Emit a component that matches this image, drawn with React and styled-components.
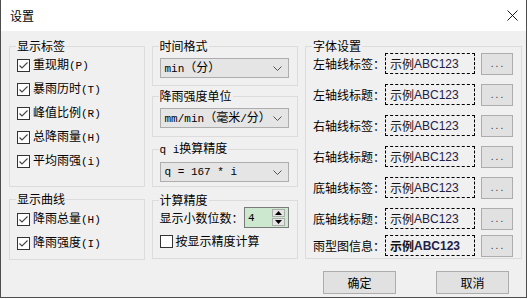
import styled, { createGlobalStyle } from 'styled-components';

const GlobalStyle = createGlobalStyle`
  html, body {
    margin: 0;
    background: #ffffff;
    font-family: "Noto Sans CJK SC", "Liberation Sans", sans-serif;
    font-size: 12px;
    color: #000;
  }
  * { box-sizing: border-box; }
`;

const Window = styled.div`
  width: 527px;
  height: 298px;
  border: 1px solid #4d4d4d;
  border-top: none;
  background: #f0f0f0;
  display: flex;
  flex-direction: column;
`;

const TitleBar = styled.div`
  height: 31px;
  background: #ffffff;
  display: flex;
  align-items: center;
  justify-content: space-between;
  padding: 0 8px 0 9px;
`;

const Title = styled.div`
  font-size: 12px;
  line-height: 14px;
`;

const Body = styled.div`
  flex: 1;
  display: flex;
  flex-direction: column;
  padding: 8px 4px 0 8px;
`;

const Columns = styled.div`
  display: flex;
  gap: 7px;
  align-items: flex-start;
`;

const Column = styled.div`
  width: ${(p) => p.$w}px;
  display: flex;
  flex-direction: column;
  gap: ${(p) => p.$gap || 0}px;
`;

const Group = styled.fieldset`
  margin: ${(p) => p.$mt || 0}px 0 0 0;
  padding: ${(p) => p.$pt || 0}px 8px 0 7px;
  border: 1px solid #dcdcdc;
  height: ${(p) => p.$h}px;
  min-width: 0;
  display: flex;
  flex-direction: column;
  gap: ${(p) => p.$gap || 0}px;
`;

const Legend = styled.legend`
  padding: 0 1px;
  margin-left: -1px;
  font-size: 12px;
  line-height: 14px;
`;

const Latin = styled.span`
  font-family: "Liberation Mono", monospace;
  font-size: 11px;
`;

const CheckRow = styled.label`
  display: flex;
  align-items: center;
  gap: 3px;
  height: 24px;
  font-size: 12px;
  line-height: 14px;
  white-space: nowrap;
`;

const Box = styled.span`
  width: 13px;
  height: 13px;
  border: 1px solid #333333;
  background: #ffffff;
  display: flex;
  align-items: center;
  justify-content: center;
  flex-shrink: 0;
`;

const Check = ({ on, children }) => (
  <CheckRow>
    <Box>
      {on && (
        <svg width="11" height="11" viewBox="0 0 11 11">
          <polyline points="1.5,5.5 4,8 9.5,2.5" fill="none" stroke="#444" strokeWidth="1.1" />
        </svg>
      )}
    </Box>
    <span>{children}</span>
  </CheckRow>
);

const Select = styled.div`
  margin-top: 5px;
  width: 129px;
  height: 20px;
  background: #e5e5e5;
  border: 1px solid #adadad;
  display: flex;
  align-items: center;
  justify-content: space-between;
  padding: 0 6px 0 4px;
  font-size: 12px;
  line-height: 14px;
  white-space: nowrap;
`;

const Chevron = () => (
  <svg width="9" height="5" viewBox="0 0 9 5">
    <polyline points="0.5,0.5 4.5,4.5 8.5,0.5" fill="none" stroke="#555" strokeWidth="1" />
  </svg>
);

const FieldRow = styled.div`
  display: flex;
  align-items: center;
  justify-content: space-between;
  height: 21px;
  font-size: 12px;
  line-height: 14px;
  white-space: nowrap;
`;

const Spinner = styled.div`
  width: 45px;
  height: 21px;
  background: #cce8cf;
  border: 1px solid #7a7a7a;
  display: flex;
  align-items: center;
  justify-content: space-between;
  padding: 0 3px 0 3px;
`;

const SpinButtons = styled.div`
  display: flex;
  flex-direction: column;
  gap: 1px;
`;

const SpinButton = styled.div`
  width: 13px;
  height: 8px;
  background: #e5e5e5;
  border: 1px solid #adadad;
  display: flex;
  align-items: center;
  justify-content: center;
`;

const Arrow = ({ up }) => (
  <svg width="7" height="4" viewBox="0 0 7 4">
    <polygon points={up ? '0,4 3.5,0 7,4' : '0,0 3.5,4 7,0'} fill="#000" />
  </svg>
);

const FontRows = styled.div`
  display: flex;
  flex-direction: column;
  gap: 10px;
`;

const FontRow = styled.div`
  display: flex;
  align-items: center;
  height: 21px;
  margin-top: ${(p) => (p.$tight ? -4 : 0)}px;
`;

const FontLabel = styled.span`
  width: 72px;
  font-size: 12px;
  line-height: 14px;
  white-space: nowrap;
`;

const Preview = styled.div`
  width: 90px;
  height: 21px;
  border: 1px dashed #000;
  display: flex;
  align-items: center;
  padding: 0 4px;
  font-family: "Liberation Sans", "Noto Sans CJK SC", sans-serif;
  font-size: 12px;
  font-weight: ${(p) => (p.$bold ? 700 : 400)};
  color: #111;
  white-space: nowrap;
`;

const Sample = styled.span`
  color: #1e2048;
`;

const DotsButton = styled.div`
  margin-left: 6px;
  width: 32px;
  height: 22px;
  background: #e1e1e1;
  border: 1px solid #adadad;
  display: flex;
  align-items: center;
  justify-content: center;
  font-family: "Liberation Sans", sans-serif;
  font-size: 10px;
  letter-spacing: 2px;
  padding-left: 2px;
  color: #333;
`;

const Footer = styled.div`
  margin-top: 11px;
  display: flex;
  justify-content: flex-end;
  gap: 40px;
  padding-right: 13px;
`;

const Button = styled.div`
  width: 73px;
  height: 23px;
  background: #e1e1e1;
  border: 1px solid #adadad;
  display: flex;
  align-items: center;
  justify-content: center;
  font-size: 12px;
  line-height: 14px;
`;

const fontRows = [
  '左轴线标签',
  '左轴线标题',
  '右轴线标签',
  '右轴线标题',
  '底轴线标签',
  '底轴线标题',
];

export default function App() {
  return (
    <>
      <GlobalStyle />
      <Window>
        <TitleBar>
          <Title>设置</Title>
          <svg width="11" height="11" viewBox="0 0 11 11">
            <path d="M0.5 0.5 L10.5 10.5 M10.5 0.5 L0.5 10.5" stroke="#000" strokeWidth="0.9" />
          </svg>
        </TitleBar>
        <Body>
          <Columns>
            <Column $w={136} $gap={5}>
              <Group $h={148}>
                <Legend>显示标签</Legend>
                <Check on>重现期<Latin>(P)</Latin></Check>
                <Check on>暴雨历时<Latin>(T)</Latin></Check>
                <Check on>峰值比例<Latin>(R)</Latin></Check>
                <Check on>总降雨量<Latin>(H)</Latin></Check>
                <Check on>平均雨强<Latin>(i)</Latin></Check>
              </Group>
              <Group $h={68} $pt={1}>
                <Legend>显示曲线</Legend>
                <Check on>降雨总量<Latin>(H)</Latin></Check>
                <Check on>降雨强度<Latin>(I)</Latin></Check>
              </Group>
            </Column>
            <Column $w={147}>
              <Group $h={47}>
                <Legend>时间格式</Legend>
                <Select>
                  <span><Latin>min</Latin>（分）</span>
                  <Chevron />
                </Select>
              </Group>
              <Group $h={48} $mt={3}>
                <Legend>降雨强度单位</Legend>
                <Select>
                  <span><Latin>mm/min</Latin>（毫米<Latin>/</Latin>分）</span>
                  <Chevron />
                </Select>
              </Group>
              <Group $h={46} $mt={4}>
                <Legend><Latin>q i</Latin>换算精度</Legend>
                <Select>
                  <Latin>q = 167 * i</Latin>
                  <Chevron />
                </Select>
              </Group>
              <Group $h={66} $mt={6} $gap={1}>
                <Legend>计算精度</Legend>
                <FieldRow>
                  <span>显示小数位数：</span>
                  <Spinner>
                    <Latin>4</Latin>
                    <SpinButtons>
                      <SpinButton><Arrow up /></SpinButton>
                      <SpinButton><Arrow /></SpinButton>
                    </SpinButtons>
                  </Spinner>
                </FieldRow>
                <Check>按显示精度计算</Check>
              </Group>
            </Column>
            <Column $w={217}>
              <Group $h={220}>
                <Legend>字体设置</Legend>
                <FontRows>
                  {fontRows.map((label) => (
                    <FontRow key={label}>
                      <FontLabel>{label}：</FontLabel>
                      <Preview>示例<Sample>ABC123</Sample></Preview>
                      <DotsButton>...</DotsButton>
                    </FontRow>
                  ))}
                  <FontRow $tight>
                    <FontLabel>雨型图信息：</FontLabel>
                    <Preview $bold>示例<Sample>ABC123</Sample></Preview>
                    <DotsButton>...</DotsButton>
                  </FontRow>
                </FontRows>
              </Group>
            </Column>
          </Columns>
          <Footer>
            <Button>确定</Button>
            <Button>取消</Button>
          </Footer>
        </Body>
      </Window>
    </>
  );
}
